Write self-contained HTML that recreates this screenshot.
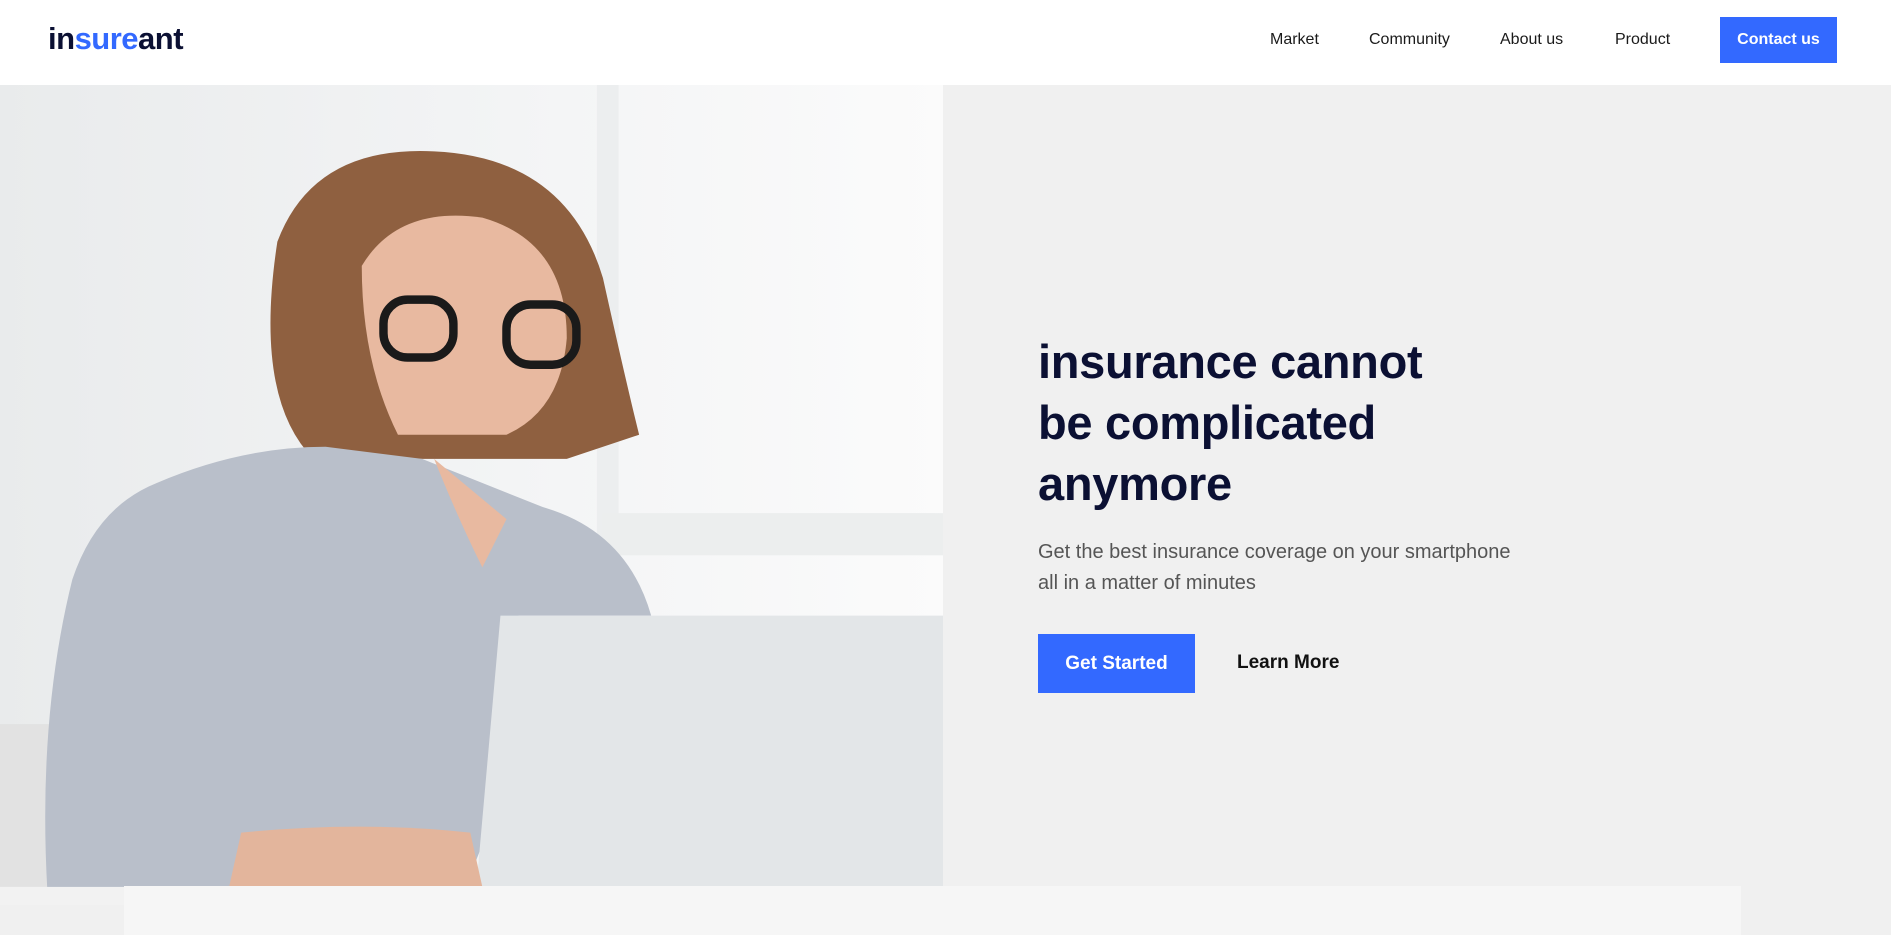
<!DOCTYPE html>
<html><head><meta charset="utf-8"><style>
*{margin:0;padding:0;box-sizing:border-box}
body{width:1891px;height:935px;overflow:hidden;background:#f0f0f0;font-family:"Liberation Sans",sans-serif;position:relative}
header{position:absolute;top:0;left:0;width:1891px;height:85px;background:#fff}
.logo{position:absolute;left:48px;top:21px;font-size:31px;font-weight:bold;color:#0b1033;letter-spacing:-0.5px}
.logo span{color:#3369ff}
nav a{position:absolute;top:31px;font-size:16px;color:#1a1a1a;text-decoration:none}
.cta{position:absolute;left:1720px;top:17px;width:117px;height:46px;background:#3369ff;color:#fff;font-size:16px;font-weight:bold;text-align:center;line-height:46px}
.img{position:absolute;left:0;top:85px;width:943px;height:820px}
h1{position:absolute;left:1038px;top:331px;font-size:47px;line-height:61px;color:#0b1033;font-weight:bold;letter-spacing:-0.3px}
p{position:absolute;left:1038px;top:537px;font-size:20px;line-height:31px;color:#555}
.gs{position:absolute;left:1038px;top:634px;width:157px;height:59px;background:#3369ff;color:#fff;font-weight:bold;font-size:19px;text-align:center;line-height:59px}
.lm{position:absolute;left:1237px;top:652px;font-weight:bold;font-size:19px;color:#111}
.panel{position:absolute;left:124px;top:886px;width:1617px;height:49px;background:#f6f6f6}
</style></head><body>
<header>
<div class="logo">in<span>sure</span>ant</div>
<nav><a style="left:1270px">Market</a><a style="left:1369px">Community</a><a style="left:1500px">About us</a><a style="left:1615px">Product</a></nav>
<div class="cta">Contact us</div>
</header>
<svg class="img" viewBox="0 70 782 680" preserveAspectRatio="none">
<defs><linearGradient id="bg" x1="0" x2="1"><stop offset="0" stop-color="#e9ebec"/><stop offset="0.6" stop-color="#f4f5f6"/><stop offset="1" stop-color="#fbfbfb"/></linearGradient></defs>
<rect x="0" y="70" width="782" height="680" fill="url(#bg)"/>
<rect x="495" y="70" width="18" height="400" fill="#eceeef"/>
<rect x="500" y="425" width="282" height="35" fill="#eceeee"/>
<rect x="0" y="600" width="60" height="150" fill="#e2e2e2"/>
<path d="M230 200 Q260 120 360 125 Q470 130 500 230 Q520 320 530 360 L470 380 L260 380 Q210 330 230 200Z" fill="#8f6040"/>
<path d="M300 220 Q330 170 400 180 Q470 200 470 280 Q465 340 420 360 L330 360 Q300 300 300 220Z" fill="#e8b9a0"/>
<rect x="318" y="248" width="58" height="48" rx="20" fill="none" stroke="#1a1a1a" stroke-width="7"/>
<rect x="420" y="252" width="58" height="50" rx="20" fill="none" stroke="#1a1a1a" stroke-width="7"/>
<path d="M130 400 Q200 370 270 370 L350 380 L450 420 Q520 440 540 510 L430 510 L400 700 L380 750 L40 750 Q30 600 60 480 Q80 420 130 400Z" fill="#b9bfca"/>
<path d="M360 380 Q380 430 400 470 L420 430 Z" fill="#e8b9a0"/>
<path d="M415 510 L782 510 L782 735 L395 735 Z" fill="#e3e6e8"/>
<path d="M200 690 Q300 680 390 690 L400 735 L190 735Z" fill="#e3b59c"/>
<rect x="0" y="735" width="782" height="15" fill="#f2f2f2"/>
</svg>
<h1>insurance cannot<br>be complicated<br>anymore</h1>
<p>Get the best insurance coverage on your smartphone<br>all in a matter of minutes</p>
<div class="gs">Get Started</div>
<div class="lm">Learn More</div>
<div class="panel"></div>
</body></html>
